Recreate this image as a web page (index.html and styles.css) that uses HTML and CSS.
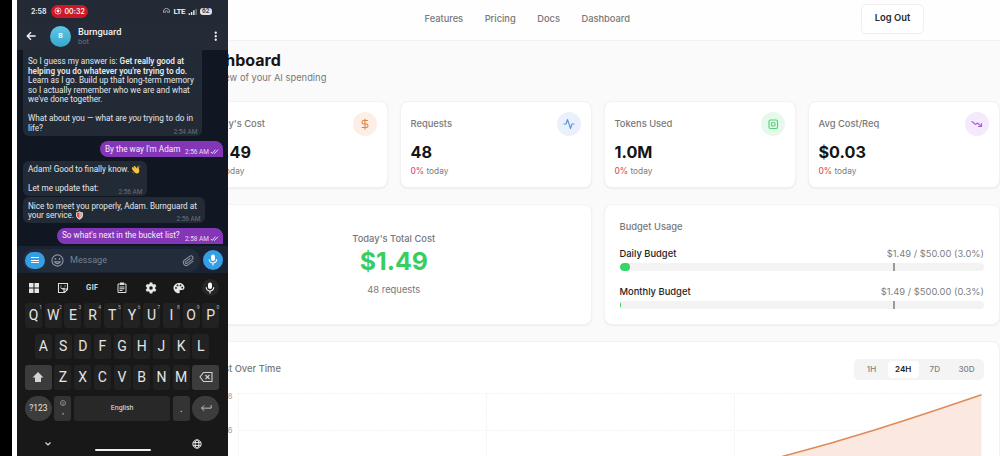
FILE: index.html
```html
<!DOCTYPE html>
<html lang="en">
<head>
<meta charset="utf-8">
<title>Burnguard Dashboard</title>
<link rel="stylesheet" href="styles.css">
</head>
<body>
<div class="stage">
  <div class="site">
    <header class="topbar">
      <nav class="nav"><a>Features</a><a>Pricing</a><a>Docs</a><a>Dashboard</a></nav>
      <button class="logout">Log Out</button>
    </header>
    <main class="main">
      <div class="heading">
        <h1>Dashboard</h1>
        <p>Overview of your AI spending</p>
      </div>
      <section class="stats">
        <article class="card stat">
          <div class="stat-head"><span>Today's Cost</span><i class="badge orange"><svg viewBox="0 0 24 24"><path d="M12 2v20M17 5H9.500a3.500 3.500 0 0 0 0 7h5a3.500 3.500 0 0 1 0 7H6"/></svg></i></div>
          <strong>$1.49</strong><p><b>0%</b> today</p>
        </article>
        <article class="card stat">
          <div class="stat-head"><span>Requests</span><i class="badge blue"><svg viewBox="0 0 24 24"><path d="M22 12h-4l-3 9L9 3l-3 9H2"/></svg></i></div>
          <strong>48</strong><p><b class="pink">0%</b> today</p>
        </article>
        <article class="card stat">
          <div class="stat-head"><span>Tokens Used</span><i class="badge green"><svg viewBox="0 0 24 24"><rect x="4" y="4" width="17" height="17" rx="3"/><rect x="9" y="9" width="7" height="7" rx="2"/></svg></i></div>
          <strong>1.0M</strong><p><b>0%</b> today</p>
        </article>
        <article class="card stat">
          <div class="stat-head"><span>Avg Cost/Req</span><i class="badge purple"><svg viewBox="0 0 24 24"><path d="M2 7l7 6 4-3 8 7M21 11v6h-6"/></svg></i></div>
          <strong>$0.03</strong><p><b>0%</b> today</p>
        </article>
      </section>
      <section class="pair">
        <article class="card total">
          <span>Today's Total Cost</span>
          <strong>$1.49</strong>
          <small>48 requests</small>
        </article>
        <article class="card budget">
          <h2>Budget Usage</h2>
          <div class="line"><b>Daily Budget</b><span>$1.49 / $50.00 (3.0%)</span></div>
          <div class="bar"><i class="fill" style="width:3%"></i><i class="mark"></i></div>
          <div class="line second"><b>Monthly Budget</b><span>$1.49 / $500.00 (0.3%)</span></div>
          <div class="bar"><i class="fill" style="width:0.3%"></i><i class="mark"></i></div>
        </article>
      </section>
      <section class="card chart">
        <div class="chart-head">
          <h2>Cost Over Time</h2>
          <div class="tabs"><span>1H</span><span class="on">24H</span><span>7D</span><span>30D</span></div>
        </div>
        <svg class="plot" width="788" height="76" viewBox="196 388 788 76">
          <g stroke="#f3f3f3" stroke-width="1" stroke-dasharray="2 1"><path d="M238 393.500H982M238 430.500H982M238.500 393V464M486.500 393V464M734.500 393V464"/></g>
          <path d="M756 464L784 456 873 430.500 981.500 395V464Z" fill="#fae5dc" fill-opacity=".88"/>
          <path d="M756 464L784 456 Q828 444.500 873 430.500 T981.500 394.800" fill="none" stroke="#df8a57" stroke-width="1.500"/>
          <g class="axis" text-anchor="end"><text x="232.500" y="398.500">$1.8</text><text x="232.500" y="433">$1.6</text></g>
        </svg>
      </section>
    </main>
  </div>

  <aside class="capture">
    <div class="phone">
      <div class="status">
        <span class="clock">2:58</span>
        <span class="rec"><svg viewBox="0 0 12 12"><circle cx="6" cy="6" r="4.600" fill="none" stroke="#fff" stroke-width="1"/><circle cx="6" cy="6" r="2.200" fill="#fff"/></svg>00:32</span>
        <svg class="hotspot" viewBox="0 0 14 12"><g fill="none" stroke="#a9adb5" stroke-width="1.900"><path d="M2 10A6 6 0 1 1 12 10M4.500 10A3 3 0 1 1 9.500 10"/></g></svg>
        <span class="lte">LTE</span>
        <svg class="signal" viewBox="0 0 10 8"><path fill="#eef0f3" d="M0 6h1.600v2H0zM2.600 4.500h1.600V8H2.600zM5.200 2.500h1.600V8H5.200z"/><path fill="#777d87" d="M7.800 1h1.600v7H7.800z"/></svg>
        <span class="battery">62</span>
      </div>
      <div class="contact">
        <svg class="back" viewBox="0 0 12 12"><path d="M11.500 6H1.500M6 1.500L1.500 6 6 10.500" fill="none" stroke="#f1f3f5" stroke-width="1.600"/></svg>
        <span class="avatar">B</span>
        <div class="who"><b>Burnguard</b><span>bot</span></div>
        <svg class="dots" viewBox="0 0 4 12"><g fill="#f1f3f5"><circle cx="2" cy="2" r="1.300"/><circle cx="2" cy="6" r="1.300"/><circle cx="2" cy="10" r="1.300"/></g></svg>
      </div>
      <div class="chat">
        <div class="msg in first"><p>So I guess my answer is: <b>Get really good at</b><br><b>helping you do whatever you're trying to do.</b><br>Learn as I go. Build up that long-term memory<br>so I actually remember who we are and what<br>we've done together.<br><br>What about you — what are <em>you</em> trying to do in<br>life?</p><time>2:54 AM</time></div>
        <div class="msg out a"><p>By the way I'm Adam</p><time>2:56 AM</time><svg class="ticks" viewBox="0 0 10 6"><path d="M.5 3.500L2.300 5.300 6 .8M4.300 4.700l.7.600L9.300.8" fill="none" stroke="#fff" stroke-width="1"/></svg></div>
        <div class="msg in b"><p>Adam! Good to finally know. <svg class="wave" viewBox="0 0 12 12"><path fill="#f7c33d" d="M1 3.200c.8-1 1.500-.4 2 .2L5 5.300 3.100 2.500c-.4-1.200.9-1.800 1.700-.8l2.700 3.200.2-2.500c.2-1 1.600-.9 1.700.1l.9 4.500c.5 3-1.500 4.700-3.700 4.300C4.500 11 3 8.300.8 5.200.4 4.300.5 3.700 1 3.200z"/><path d="M9.500.8c1 .4 1.700 1.200 1.800 2.300M.6 8.500c.5 1.200 1.300 2 2.500 2.300" fill="none" stroke="#c99b35" stroke-width=".8"/></svg><br><br>Let me update that:</p><time>2:56 AM</time></div>
        <div class="msg in c"><p>Nice to meet you properly, Adam. Burnguard at<br>your service. <svg class="shield" viewBox="0 0 9 11"><path fill="#e8e5e3" d="M0 1.500Q2.500 1.500 4.500 0 6.500 1.500 9 1.500V5q0 4-4.500 6Q0 9 0 5z"/><path fill="#d34b4a" d="M1 2.300Q3 2.200 4.500 1V9.700Q1 8 1 5z"/><path fill="#d99b94" d="M5.500 1.700Q6.800 2.300 8 2.300V5q0 2.700-2.500 4.200z"/></svg></p><time>2:56 AM</time></div>
        <div class="msg out d"><p>So what's next in the bucket list?</p><time>2:58 AM</time><svg class="ticks" viewBox="0 0 10 6"><path d="M.5 3.500L2.300 5.300 6 .8M4.300 4.700l.7.600L9.300.8" fill="none" stroke="#fff" stroke-width="1"/></svg></div>
      </div>
      <div class="composer">
        <div class="pill">
          <span class="menu"><i></i><i></i><i></i></span>
          <svg class="smile" viewBox="0 0 14 14"><g fill="none" stroke="#8d96a3" stroke-width="1.200"><circle cx="7" cy="7" r="6"/><path d="M3.800 8.300Q7 12.500 10.200 8.300z"/></g><circle cx="4.800" cy="5.300" r="1" fill="#8d96a3"/><circle cx="9.200" cy="5.300" r="1" fill="#8d96a3"/></svg>
          <span class="hint">Message</span>
          <svg class="clip" viewBox="0 0 24 24"><path transform="rotate(8 12 12)" d="M21 11.500l-8.800 8.600a5.400 5.400 0 0 1-7.700-7.600l9-8.800a3.700 3.700 0 0 1 5.200 5.200l-8.800 8.600a1.900 1.900 0 0 1-2.700-2.700l8-7.800" fill="none" stroke="#8d96a3" stroke-width="1.900"/></svg>
        </div>
        <span class="voice"><svg viewBox="0 0 24 24"><use href="#mic"/></svg></span>
      </div>
      <div class="keyboard">
        <div class="tools">
          <svg viewBox="0 0 24 24"><path fill="#e7e7e7" d="M2 2h9v9H2zM13 2h9v9h-9zM2 13h9v9H2zM13 13h9v9h-9z"/></svg>
          <svg viewBox="0 0 24 24"><path d="M3 3h18v12l-6 6H3zM21 14h-7v7M7 8h2M15 8h2M7 11q4 5 8 1" fill="none" stroke="#dedede" stroke-width="2.200"/></svg>
          <span class="gif">GIF</span>
          <svg viewBox="0 0 24 24"><path d="M4 4h16v17H4zM7 10h10M7 13.500h10M7 17h6" fill="none" stroke="#dedede" stroke-width="2"/><path fill="#dedede" d="M8 1h8v5H8z"/></svg>
          <svg viewBox="0 0 24 24"><path fill="#e7e7e7" fill-rule="evenodd" d="M9.500 1h5l.6 3 2.200 1.200 2.900-1 2.500 4.300-2.300 2v2.800l2.300 2-2.500 4.300-2.900-1-2.200 1.300-.6 3h-5l-.6-3-2.200-1.300-2.900 1-2.500-4.300 2.300-2v-2.800l-2.300-2 2.500-4.300 2.900 1L8.900 4zM12 8.500a3.500 3.500 0 1 0 0 7 3.500 3.500 0 0 0 0-7z"/></svg>
          <svg viewBox="0 0 24 24"><path fill="#e7e7e7" fill-rule="evenodd" d="M12 2C6 2 1 6.500 1 12s5 10.500 10 10.500c3 0 3-2 2.200-3.400-.8-1.600.2-3.100 2-3.100H18c3 0 5-2 5-5C23 6 18 2 12 2zM6 10a1.800 1.800 0 1 1 0 3.600A1.800 1.800 0 0 1 6 10zm3-5a1.800 1.800 0 1 1 0 3.600A1.800 1.800 0 0 1 9 5zm6 0a1.800 1.800 0 1 1 0 3.600A1.800 1.800 0 0 1 15 5zm3.500 4.500a1.800 1.800 0 1 1 0 3.600 1.800 1.800 0 0 1 0-3.600z"/></svg>
          <span class="mic-key"><svg viewBox="0 0 24 24"><g id="mic"><rect x="8" y="1" width="8" height="13" rx="4" fill="#fff"/><path d="M4.500 10.500a7.500 7.500 0 0 0 15 0M12 18v5" fill="none" stroke="#fff" stroke-width="2.200"/></g></svg></span>
        </div>
        <div class="keys"><kbd>Q<sup>1</sup></kbd><kbd>W<sup>2</sup></kbd><kbd>E<sup>3</sup></kbd><kbd>R<sup>4</sup></kbd><kbd>T<sup>5</sup></kbd><kbd>Y<sup>6</sup></kbd><kbd>U<sup>7</sup></kbd><kbd>I<sup>8</sup></kbd><kbd>O<sup>9</sup></kbd><kbd>P<sup>0</sup></kbd></div>
        <div class="keys mid"><kbd>A</kbd><kbd>S</kbd><kbd>D</kbd><kbd>F</kbd><kbd>G</kbd><kbd>H</kbd><kbd>J</kbd><kbd>K</kbd><kbd>L</kbd></div>
        <div class="keys"><kbd class="wide"><svg viewBox="0 0 12 12"><path fill="#d5d5d5" d="M6 1l5.500 5.500H9V11H3V6.500H.5z"/></svg></kbd><kbd>Z</kbd><kbd>X</kbd><kbd>C</kbd><kbd>V</kbd><kbd>B</kbd><kbd>N</kbd><kbd>M</kbd><kbd class="wide"><svg class="del" viewBox="0 0 14 12"><path d="M4.500 1.500H13v9H4.500L1 6zM6.500 4l4 4M10.500 4l-4 4" fill="none" stroke="#d0d0d0" stroke-width="1.100"/></svg></kbd></div>
        <div class="keys"><kbd class="wide round num">?123</kbd><kbd class="lit emoji"><svg viewBox="0 0 12 12"><circle cx="6" cy="6" r="5" fill="none" stroke="#bbb" stroke-width="1.200"/><path d="M3.500 7q2.500 3 5 0M4 4.500h1M7 4.500h1" fill="none" stroke="#bbb" stroke-width="1.200"/></svg><span>,</span></kbd><kbd class="space">English</kbd><kbd class="lit dot">.</kbd><kbd class="wide round"><svg class="enter" viewBox="0 0 14 12"><path d="M13 2.500V6H2M5 2.800L1.800 6 5 9.200" fill="none" stroke="#c9c9c9" stroke-width="1.100"/></svg></kbd></div>
        <div class="system">
          <svg class="chev" viewBox="0 0 8 8"><path d="M1.500 2.500L4 5l2.500-2.500" fill="none" stroke="#ddd" stroke-width="1.200"/></svg>
          <i class="home"></i>
          <svg class="globe" viewBox="0 0 12 12"><g fill="none" stroke="#e3e3e3" stroke-width="1.200"><circle cx="6" cy="6" r="5"/><ellipse cx="6" cy="6" rx="2.300" ry="5"/><path d="M1.200 4.300h9.600M1.200 7.700h9.600"/></g></svg>
        </div>
      </div>
    </div>
  </aside>
</div>
</body>
</html>
```
FILE: styles.css
```css
* { box-sizing: border-box; }
body { margin: 0; background: #fafafa; font-family: Inter, sans-serif; color: #151515; }
h1, h2, p { margin: 0; }
svg { display: block; flex: none; }
i { font-style: normal; }
.stage { position: relative; width: 1000px; height: 456px; overflow: hidden; }

/* dashboard */
.topbar { height: 41px; background: #fefefe; border-bottom: 1px solid #f2f2f2; display: flex; align-items: center; padding: 0 76px 3px 424.5px; justify-content: space-between; }
.nav { display: flex; gap: 21.5px; font-size: 9.3px; font-weight: 500; color: #777; }
.logout { width: 63px; height: 30px; border: 1px solid #f0f0f0; border-radius: 5px; background: #fff; font: 600 9.4px Inter, sans-serif; color: #2a2a2a; padding: 0 0 2px; }
.main { padding-left: 195.5px; }
.heading { height: 60px; padding-top: 9px; }
h1 { font-size: 16px; line-height: 20px; font-weight: 700; }
.heading p { font-size: 9.35px; line-height: 14px; color: #777; padding-top: 1px; }
.card { background: #fff; border-radius: 8px; border: 1px solid #f2f2f2; box-shadow: 0 1px 2px #0000000f; }
.stats { display: grid; grid-template-columns: repeat(4, 192.5px); gap: 11.5px; }
.stat { height: 87px; padding: 9px 10px 0; }
.stat-head { display: flex; justify-content: space-between; align-items: center; height: 25px; font-size: 9.35px; font-weight: 500; color: #777; }
.badge { width: 24px; height: 24px; border-radius: 50%; display: grid; place-items: center; }
.badge svg { width: 12px; height: 12px; fill: none; stroke: currentColor; stroke-width: 2.2; stroke-linecap: round; stroke-linejoin: round; }
.orange { background: #fdefe6; color: #e58443; }
.blue { background: #eaf0fc; color: #5b91dc; }
.green { background: #e5faeb; color: #53cf75; }
.purple { background: #f5e9fd; color: #a663d2; }
.stat strong { display: block; font-size: 16.2px; line-height: 20px; font-weight: 700; margin-top: 6px; }
.stat p { font-size: 8.3px; line-height: 12px; color: #7c7c7c; margin-top: 3px; }
.stat p b { font-weight: 500; color: #d95459; }
.stat p .pink { color: #d64f79; }
.pair { display: grid; grid-template-columns: 396.5px 396.5px; gap: 11.5px; margin-top: 16px; }
.pair .card { height: 121px; }
.total { display: flex; flex-direction: column; align-items: center; padding-top: 27px; color: #777; }
.total span { font-size: 9.35px; font-weight: 500; line-height: 14px; }
.total strong { font-size: 24.8px; line-height: 30px; font-weight: 650; color: #37ce60; }
.total small { font-size: 9.4px; line-height: 14px; margin-top: 7px; }
.budget { padding: 15px 15px 0; }
h2 { font-size: 9.35px; line-height: 14px; font-weight: 500; color: #777; }
.line { display: flex; justify-content: space-between; font-size: 9.4px; line-height: 14px; margin-top: 13px; color: #808080; }
.line b { font-weight: 500; color: #1c1c1c; }
.line.second { margin-top: 13.5px; }
.bar { position: relative; height: 8px; border-radius: 4px; background: #f3f3f3; margin-top: 2px; overflow: hidden; }
.fill { display: block; height: 8px; background: #35d665; border-radius: 4px; }
.mark { position: absolute; left: 75%; top: 0; width: 2px; height: 8px; background: #999; }
.chart { margin-top: 16px; height: 150px; width: 804.5px; }
.chart-head { display: flex; justify-content: space-between; align-items: center; padding: 16px 15px 0; height: 38px; }
.tabs { display: flex; width: 130px; height: 21px; background: #f4f4f4; border-radius: 5px; padding: 2px; font-size: 8.1px; font-weight: 500; color: #808080; align-items: center; justify-content: space-between; }
.tabs span { width: 31px; height: 17px; display: grid; place-items: center; }
.tabs .on { background: #fff; border-radius: 4px; color: #222; font-weight: 600; }
.plot { margin: 8px 0 0 -.5px; }
.axis { font: 7.5px Inter, sans-serif; fill: #999; }

/* phone screen */
.capture { position: absolute; left: 0; top: 0; width: 228px; height: 456px; background: #000; display: flex; padding-left: 12px; font-family: Roboto, sans-serif; }
.phone { width: 216px; border-left: 5px solid #fff; background: #181818; }
.status { height: 22px; background: #242a35; display: flex; align-items: center; padding-left: 14px; color: #f1f2f4; font-size: 7.5px; font-weight: 600; }
.clock { width: 20px; font-family: Inter, sans-serif; font-size: 7px; }
.rec { width: 37px; height: 13px; border-radius: 7px; background: #cf1828; display: flex; align-items: center; gap: 2.5px; padding-left: 3px; font: 600 7px Inter, sans-serif; }
.rec svg { width: 8px; }
.hotspot { width: 7px; margin: 0 4px 0 74.5px; }
.lte { width: 14px; font-size: 8px; letter-spacing: -.4px; }
.signal { width: 10px; height: 7px; }
.battery { margin-left: 2px; width: 12.5px; height: 7px; border-radius: 3px; background: #dfe2e6; color: #444a54; font-size: 6.5px; line-height: 7px; text-align: center; font-weight: 700; }
.contact { height: 28px; background: #242a36; display: flex; align-items: center; padding: 0 11px 0 9px; }
.back { width: 10px; }
.avatar { width: 21px; height: 21px; border-radius: 50%; margin: 0 7px 0 14px; background: linear-gradient(#62c8e6, #36a7cd); color: #fff; font-size: 7px; font-weight: 600; display: grid; place-items: center; }
.who { flex: 1; color: #f0f2f4; }
.who b { display: block; font-size: 9.3px; line-height: 10px; font-weight: 500; }
.who span { display: block; font-size: 7.5px; line-height: 9px; color: #69717e; }
.dots { width: 3.5px; }
.chat { height: 196px; background: #111722; padding: 0 5px 0 6px; display: flex; flex-direction: column; align-items: flex-start; }
.msg { position: relative; font-size: 8.2px; line-height: 9.55px; color: #e4e7ea; white-space: nowrap; padding: 4px 5px 3px; border-radius: 6px; }
.msg b { font-weight: 600; }
.in { background: #222a36; }
.msg time { position: absolute; right: 4.5px; bottom: 0; font-size: 6.5px; line-height: 8px; color: #667080; }
.msg.out time { right: 14px; bottom: 1px; color: #ead9f5; }
.out { align-self: flex-end; background: #8336b5; border-radius: 8px 8px 0 8px; color: #f6effa; }
.ticks { position: absolute; right: 4px; bottom: 3px; width: 9px; height: 5px; }
.first { width: 179px; height: 86px; padding-top: 7px; border-radius: 0 0 6px 6px; }
.a { width: 123px; height: 16px; margin-top: 4.5px; }
.b { width: 124px; height: 35px; margin-top: 4px; }
.c { width: 182px; height: 26px; margin-top: 1.5px; padding-top: 4.5px; }
.d { width: 166px; height: 16px; margin-top: 4.5px; padding-top: 3.5px; }
.wave, .shield { display: inline-block; height: 9px; vertical-align: -2px; margin-top: -3px; }
.wave { width: 10px; }
.shield { width: 7px; }
.composer { height: 27px; background: #1a2333; display: flex; align-items: center; padding: 1px 5px 0 6px; gap: 3px; }
.pill { flex: 1; height: 23px; border-radius: 12px; background: #222c3b; display: flex; align-items: center; padding: 0 5px 0 2px; }
.menu { width: 20px; height: 17px; border-radius: 8.5px; background: #349fe5; display: flex; flex-direction: column; align-items: center; justify-content: center; gap: 1.5px; }
.menu i { width: 8px; height: 1px; background: #fff; }
.smile { width: 13px; margin: 0 6px; }
.hint { flex: 1; font-size: 9.1px; color: #758090; }
.clip { width: 13px; }
.voice { width: 20px; height: 20px; border-radius: 50%; background: #349fe5; display: grid; place-items: center; }
.voice svg { width: 12px; height: 12px; }
.keyboard { height: 183px; padding: 1px 8px 0; }
.tools { height: 29px; display: flex; align-items: center; justify-content: space-between; padding: 0 1px 2px 3px; }
.tools svg { width: 12px; height: 12px; }
.gif { width: 14px; text-align: center; font: 700 7px Inter, sans-serif; color: #dedede; letter-spacing: .4px; }
.mic-key { width: 17px; height: 17px; border-radius: 50%; background: #262626; display: grid; place-items: center; }
.keys { display: flex; gap: 2.7px; height: 25px; margin-bottom: 6px; }
kbd { position: relative; width: 17px; height: 25px; flex: none; border-radius: 3px; background: #222; display: grid; place-items: center; font: 400 14px Roboto, sans-serif; color: #e5e5e5; padding-bottom: 1px; }
kbd sup { position: absolute; right: 0; top: 1px; font-size: 5px; line-height: 6px; color: #aaa; }
.mid { padding-left: 9.85px; }
.wide { width: 26.8px; background: #3c3c3c; }
.wide svg { width: 12px; }
.wide .del { width: 14px; }
.round { border-radius: 13px; }
.num { font-size: 8.5px; }
.lit { background: #343434; }
.emoji { font-size: 8px; display: flex; flex-direction: column; align-items: center; justify-content: center; gap: 1px; }
.emoji svg { width: 6px; }
.emoji span { line-height: 9px; }
.space { width: 95.9px; background: #282828; font-size: 7px; }
.dot { font-size: 10px; }
.system { position: relative; height: 31px; display: flex; align-items: center; justify-content: space-between; padding: 2px 18.5px 0 19px; }
.chev { width: 8px; }
.globe { width: 10px; }
.home { position: absolute; left: 69.5px; top: 22px; width: 56px; height: 2px; border-radius: 1px; background: #eee; }
```
